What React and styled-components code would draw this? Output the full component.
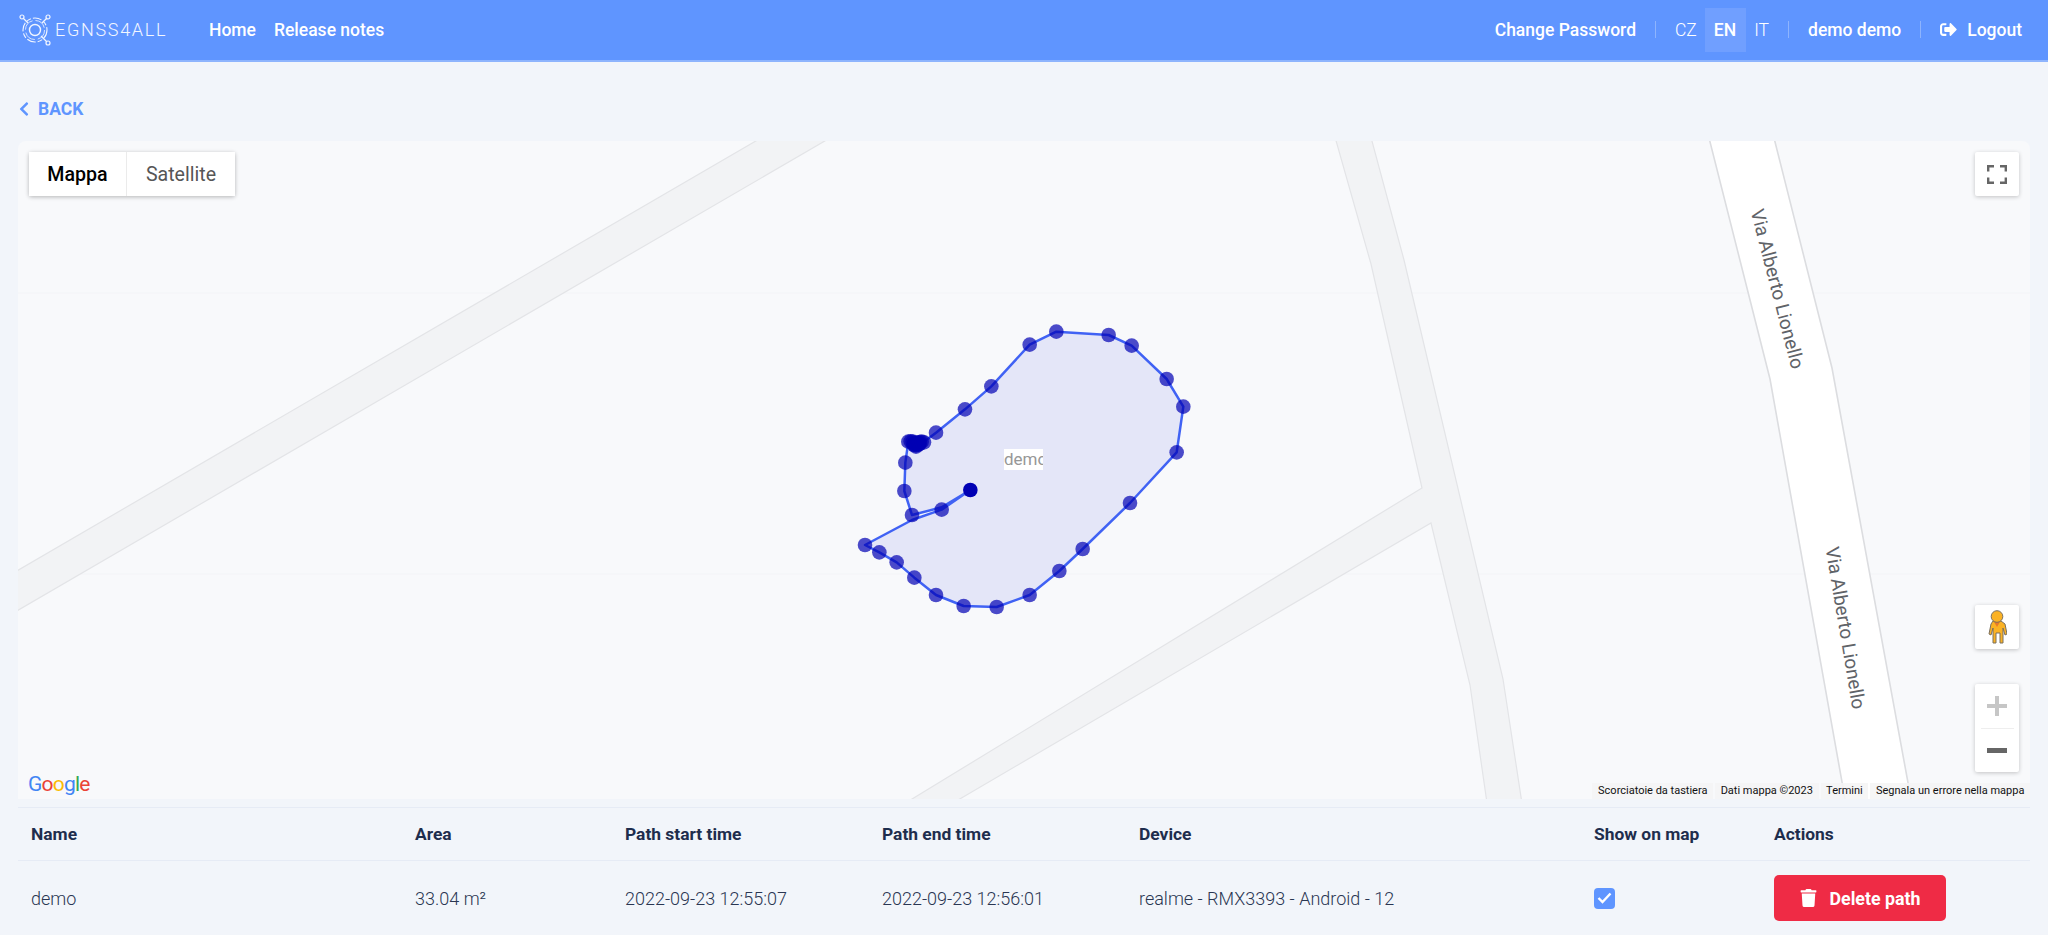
import React from "react";
import styled, { createGlobalStyle } from "styled-components";
import { FaSignOutAlt, FaTrash, FaChevronLeft } from "react-icons/fa";

const Global = createGlobalStyle`
  html, body { margin: 0; padding: 0; background: #f2f5fa; }
  body { font-family: Roboto, "Liberation Sans", sans-serif; color: #1e2d4d; overflow: hidden; }
  * { box-sizing: border-box; }
`;

const Page = styled.div`
  width: 2048px;
  height: 935px;
  display: flex;
  flex-direction: column;
  background: #f2f5fa;
`;

const Header = styled.header`
  height: 62px;
  flex: none;
  display: flex;
  align-items: center;
  justify-content: space-between;
  padding: 0 26px 1px 17px;
  background: #5f95ff;
  border-bottom: 2px solid #8eb4fd;
  color: #fff;
`;

const HeaderGroup = styled.div`
  display: flex;
  align-items: center;
`;

const LogoMark = styled.div`
  display: flex;
  align-items: center;
  width: 192px;
  gap: 2px;
`;

const LogoText = styled.span`
  font-size: 18px;
  font-weight: 300;
  letter-spacing: 1.7px;
  color: #f2f6ff;
`;

const NavLink = styled.a`
  font-size: 17.5px;
  font-weight: 500;
  color: #fff;
  margin-right: ${(p) => p.$mr || 0}px;
  white-space: nowrap;
`;

const Sep = styled.span`
  width: 1px;
  height: 17px;
  background: #8eb4fd;
  margin: 0 19px;
`;

const Lang = styled.a`
  height: 44px;
  display: flex;
  align-items: center;
  padding: 0 ${(p) => p.$pr}px 0 ${(p) => p.$pl}px;
  font-size: 17.5px;
  font-weight: ${(p) => (p.$active ? 500 : 300)};
  background: ${(p) => (p.$active ? "#709fff" : "transparent")};
  color: #fff;
`;

const LogoutIcon = styled(FaSignOutAlt)`
  width: 17px;
  height: 17px;
  margin-right: 10px;
`;

const BackRow = styled.div`
  height: 79px;
  flex: none;
  display: flex;
  align-items: center;
  padding: 14px 0 0 16px;
  color: #5f95ff;
  font-size: 17.5px;
  font-weight: 700;
  gap: 6px;
`;

const Map = styled.div`
  position: relative;
  flex: none;
  margin: 0 18px;
  height: 658px;
  background: #f8f9fb;
  border-radius: 8px 8px 0 0;
  overflow: hidden;
`;

const MapDrawing = styled.svg`
  display: block;
  width: 2012px;
  height: 658px;
`;

const StreetLabel = styled.text`
  font-family: Roboto, sans-serif;
  font-size: 19px;
  fill: #5f6368;
  text-anchor: middle;
`;

const PathLabel = styled.div`
  position: absolute;
  left: 986px;
  top: 308px;
  width: 39px;
  height: 21px;
  overflow: hidden;
  background: #fff;
  color: #979797;
  font-size: 17px;
  line-height: 21px;
  white-space: nowrap;
`;

const MapTypes = styled.div`
  position: absolute;
  left: 11px;
  top: 11px;
  display: flex;
  height: 44px;
  gap: 1px;
  background: #ebebeb;
  border-radius: 2px;
  box-shadow: 0 1px 4px rgba(0, 0, 0, 0.28);
`;

const MapType = styled.button`
  border: 0;
  margin: 0;
  padding: 0;
  width: ${(p) => p.$w}px;
  background: #fff;
  font-family: Roboto, sans-serif;
  font-size: 19.6px;
  font-weight: ${(p) => (p.$active ? 500 : 400)};
  color: ${(p) => (p.$active ? "#000" : "#565656")};
`;

const MapButton = styled.div`
  position: absolute;
  right: 11px;
  top: ${(p) => p.$top}px;
  width: 44px;
  height: 44px;
  background: #fff;
  border-radius: 2px;
  box-shadow: 0 1px 4px rgba(0, 0, 0, 0.22);
  display: flex;
  align-items: center;
  justify-content: center;
`;

const ZoomBox = styled.div`
  position: absolute;
  right: 11px;
  top: 543px;
  width: 44px;
  height: 88px;
  background: #fff;
  border-radius: 2px;
  box-shadow: 0 1px 4px rgba(0, 0, 0, 0.22);
  display: flex;
  flex-direction: column;
  align-items: center;
`;

const ZoomStep = styled.div`
  flex: 1;
  display: flex;
  align-items: center;
  justify-content: center;
`;

const ZoomDivider = styled.div`
  width: 33px;
  height: 1px;
  background: #eeeeee;
`;

const GoogleMark = styled.div`
  position: absolute;
  left: 10px;
  bottom: 2px;
  font-family: Roboto, sans-serif;
  font-size: 21px;
  line-height: 26px;
  letter-spacing: -0.8px;
`;

const Letter = styled.span`
  color: ${(p) => p.$c};
`;

const Attribution = styled.div`
  position: absolute;
  right: 0;
  bottom: 0;
  height: 16px;
  display: flex;
  gap: 2px;
`;

const AttrItem = styled.span`
  padding: 0 5.6px;
  background: rgba(245, 245, 245, 0.85);
  font-size: 11px;
  line-height: 16px;
  color: #111;
  white-space: nowrap;
`;

const Table = styled.div`
  margin: 8px 18px 0;
  border-top: 1px solid #e6ebf5;
`;

const Row = styled.div`
  display: grid;
  grid-template-columns: 384px 210px 257px 257px 455px 180px 1fr;
  align-items: center;
  height: ${(p) => p.$h}px;
  border-bottom: ${(p) => (p.$head ? "1px solid #e6ebf5" : "none")};
`;

const HeadCell = styled.div`
  padding-left: 13px;
  font-size: 17.4px;
  font-weight: 700;
  color: #1e2d4d;
  white-space: nowrap;
`;

const Cell = styled.div`
  padding-left: 13px;
  font-size: 18px;
  font-weight: 300;
  color: #2a3652;
  white-space: nowrap;
`;

const CheckBox = styled.span`
  display: flex;
  align-items: center;
  justify-content: center;
  width: 21px;
  height: 21px;
  border-radius: 4px;
  background: #5f95ff;
`;

const DeleteButton = styled.button`
  display: flex;
  align-items: center;
  justify-content: center;
  gap: 13px;
  width: 172px;
  height: 46px;
  border: 0;
  border-radius: 5px;
  background: #ef2b45;
  color: #fff;
  font-family: Roboto, sans-serif;
  font-size: 17.8px;
  font-weight: 700;
`;

const TrashIcon = styled(FaTrash)`
  width: 17px;
  height: 18px;
`;

const z = (x, y) => [x / 3 + 840, y / 3 + 310];
const outline = [
  [391, 540], [305, 592], [216, 615], [193, 543], [196, 458], [205, 395],
  [228, 405], [250, 397], [288, 368], [375, 298], [454, 229], [569, 104],
  [649, 65], [806, 75], [875, 107], [980, 207], [1030, 290], [1010, 427],
  [870, 579], [728, 717], [658, 783], [569, 855], [470, 891], [371, 888],
  [288, 855], [223, 803], [170, 757], [118, 727], [75, 705], [216, 630], [305, 599],
];
const dots = [
  [305, 599], [216, 615], [193, 543], [196, 458], [205, 395], [212, 394], [218, 395],
  [225, 398], [228, 406], [232, 400], [236, 398], [240, 396], [245, 395], [252, 397],
  [222, 402], [238, 402], [228, 410], [222, 405], [235, 404], [288, 368], [375, 298], [454, 229],
  [569, 104], [649, 65], [806, 75], [875, 107], [980, 207], [1030, 290], [1010, 427],
  [870, 579], [728, 717], [658, 783], [569, 855], [470, 891], [371, 888], [288, 855],
  [223, 803], [170, 757], [118, 727], [75, 705],
];
const toPts = (a) => a.map(([x, y]) => z(x, y).join(",")).join(" ");

const Logo = () => (
  <svg width="36" height="36" viewBox="0 0 36 36" fill="none" stroke="#f2f6ff">
    <circle cx="18" cy="18" r="12" strokeWidth="1.1" strokeDasharray="9 2 5 2" />
    <circle cx="18" cy="18" r="9.5" strokeWidth="1" strokeDasharray="12 3" opacity=".8" />
    <circle cx="18" cy="18" r="5.5" strokeWidth="1.4" />
    <path d="M6 6l5 5M30 6l-5 5M30 30l-6-6" strokeWidth="1.3" />
    <circle cx="5" cy="5" r="2" strokeWidth="1.2" />
    <circle cx="31" cy="5" r="2" strokeWidth="1.2" />
    <circle cx="31" cy="31" r="2" strokeWidth="1.2" />
  </svg>
);

const Pegman = () => (
  <svg width="20" height="34" viewBox="0 0 20 34">
    <path d="M6 11h8l4 3 2 10-2 1-2-7v15h-3V23H9v10H6V18l-2 7-2-1 2-10z" fill="#fbb224" stroke="#7b705f" strokeWidth="1" strokeLinejoin="round" />
    <path d="M6.5 11h7L10 17z" fill="#e8792a" />
    <circle cx="10" cy="6.5" r="5.8" fill="#fbb224" stroke="#7b705f" strokeWidth="1" />
  </svg>
);

const Fullscreen = () => (
  <svg width="20" height="19" viewBox="0 0 20 19" fill="none" stroke="#666" strokeWidth="2.4">
    <path d="M1.2 6.5V1.2H7M13 1.2h5.8v5.3M18.8 12.5v5.3H13M7 17.8H1.2v-5.3" />
  </svg>
);

const Plus = () => (
  <svg width="20" height="20" viewBox="0 0 20 20" fill="#c6c6c6">
    <path d="M8 0h4v8h8v4h-8v8H8v-8H0V8h8z" />
  </svg>
);

const Minus = () => (
  <svg width="20" height="5" viewBox="0 0 20 5" fill="#666">
    <rect width="20" height="5" />
  </svg>
);

const Check = () => (
  <svg width="15" height="12" viewBox="0 0 15 12" fill="none" stroke="#fff" strokeWidth="2.4">
    <path d="M1.5 6l4 4 8-8.5" />
  </svg>
);

export default function App() {
  return (
    <Page>
      <Global />
      <Header>
        <HeaderGroup>
          <LogoMark>
            <Logo />
            <LogoText>EGNSS4ALL</LogoText>
          </LogoMark>
          <NavLink $mr={18}>Home</NavLink>
          <NavLink>Release notes</NavLink>
        </HeaderGroup>
        <HeaderGroup>
          <NavLink>Change Password</NavLink>
          <Sep />
          <Lang $pl={0} $pr={8}>CZ</Lang>
          <Lang $active $pl={9} $pr={10}>EN</Lang>
          <Lang $pl={8} $pr={0}>IT</Lang>
          <Sep />
          <NavLink>demo demo</NavLink>
          <Sep />
          <LogoutIcon />
          <NavLink>Logout</NavLink>
        </HeaderGroup>
      </Header>

      <BackRow>
        <FaChevronLeft size={16} />
        <span>BACK</span>
      </BackRow>

      <Map>
        <MapDrawing viewBox="18 141 2012 658">
          <path d="M18 293H2030M18 574H2030" stroke="#f3f4f7" strokeWidth="1" />
          <g fill="#f2f3f5" stroke="#e3e4e7" strokeWidth="1.2">
            <path d="M773 131L8 576V616L842 131Z" />
            <path d="M1333 130L1371 264L1422 488L894 810H941L1431 523L1470 685L1488 810H1523L1503 679L1404 260L1369 130Z" />
          </g>
          <path d="M1707 130L1770 379L1847 810H1913L1832 368L1772 130Z" fill="#fff" stroke="#dcdde0" strokeWidth="1.6" />
          <StreetLabel transform="translate(1777 289) rotate(75.5)" dy="6">Via Alberto Lionello</StreetLabel>
          <StreetLabel transform="translate(1845 628) rotate(80.5)" dy="6">Via Alberto Lionello</StreetLabel>
          <polygon points={toPts(outline)} fill="#e4e6f8" />
          <polygon points={toPts(outline)} fill="none" stroke="#4062f4" strokeWidth="2.5" strokeLinejoin="round" />
          {dots.map(([x, y], i) => {
            const [cx, cy] = z(x, y);
            return <circle key={i} cx={cx} cy={cy} r="7.3" fill="#0000b4" opacity="0.7" />;
          })}
          <circle cx={z(391, 540)[0]} cy={z(391, 540)[1]} r="7.3" fill="#0000b4" />
        </MapDrawing>

        <PathLabel>demo</PathLabel>

        <MapTypes>
          <MapType $active $w={97}>Mappa</MapType>
          <MapType $w={108}>Satellite</MapType>
        </MapTypes>
        <MapButton $top={11}><Fullscreen /></MapButton>
        <MapButton $top={464}><Pegman /></MapButton>
        <ZoomBox>
          <ZoomStep><Plus /></ZoomStep>
          <ZoomDivider />
          <ZoomStep><Minus /></ZoomStep>
        </ZoomBox>

        <GoogleMark>
          <Letter $c="#4285f4">G</Letter>
          <Letter $c="#ea4335">o</Letter>
          <Letter $c="#fbbc05">o</Letter>
          <Letter $c="#4285f4">g</Letter>
          <Letter $c="#34a853">l</Letter>
          <Letter $c="#ea4335">e</Letter>
        </GoogleMark>

        <Attribution>
          <AttrItem>Scorciatoie da tastiera</AttrItem>
          <AttrItem>Dati mappa ©2023</AttrItem>
          <AttrItem>Termini</AttrItem>
          <AttrItem>Segnala un errore nella mappa</AttrItem>
        </Attribution>
      </Map>

      <Table>
        <Row $h={53} $head>
          <HeadCell>Name</HeadCell>
          <HeadCell>Area</HeadCell>
          <HeadCell>Path start time</HeadCell>
          <HeadCell>Path end time</HeadCell>
          <HeadCell>Device</HeadCell>
          <HeadCell>Show on map</HeadCell>
          <HeadCell>Actions</HeadCell>
        </Row>
        <Row $h={74}>
          <Cell>demo</Cell>
          <Cell>33.04 m²</Cell>
          <Cell>2022-09-23 12:55:07</Cell>
          <Cell>2022-09-23 12:56:01</Cell>
          <Cell>realme - RMX3393 - Android - 12</Cell>
          <Cell><CheckBox><Check /></CheckBox></Cell>
          <Cell>
            <DeleteButton><TrashIcon />Delete path</DeleteButton>
          </Cell>
        </Row>
      </Table>
    </Page>
  );
}
